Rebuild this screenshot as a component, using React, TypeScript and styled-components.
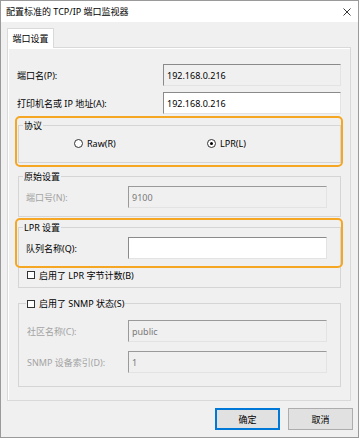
import React from "react";
import styled, { createGlobalStyle, css } from "styled-components";

const GlobalStyle = createGlobalStyle`
  html, body {
    margin: 0;
    padding: 0;
    background: #fff;
  }
  body {
    font-family: "Noto Sans", "Noto Sans CJK SC", sans-serif;
    font-size: 9px;
    color: #000;
  }
  * {
    box-sizing: border-box;
  }
`;

const Window = styled.div`
  width: 359px;
  height: 438px;
  border: 1px solid #9a9a9a;
  background: #f0f0f0;
  display: flex;
  flex-direction: column;
`;

const TitleBar = styled.div`
  height: 21px;
  background: #fff;
  display: flex;
  align-items: center;
  justify-content: space-between;
  padding: 0 7px 0 5px;
  line-height: 13px;
`;

const TabStrip = styled.div`
  margin-top: 6px;
  padding-left: 6px;
  display: flex;
  position: relative;
  z-index: 1;
`;

const Tab = styled.div`
  width: 47px;
  height: 20px;
  margin-bottom: -1px;
  border: 1px solid #d9d9d9;
  border-bottom: none;
  background: #fff;
  display: flex;
  align-items: center;
  justify-content: center;
  line-height: 13px;
`;

const Panel = styled.div`
  margin-left: 6px;
  width: 344px;
  height: 354px;
  border: 1px solid #d9d9d9;
  box-shadow: inset 1px 1px 0 #fff;
  padding: 0 9px;
  display: flex;
  flex-direction: column;
`;

const Row = styled.div<{ $top: number; $indent?: number }>`
  display: flex;
  align-items: center;
  height: 22px;
  margin-top: ${(p) => p.$top}px;
  padding-left: ${(p) => p.$indent ?? 0}px;
  line-height: 13px;
`;

const Label = styled.span<{ $width: number; $disabled?: boolean }>`
  width: ${(p) => p.$width}px;
  flex: none;
  color: ${(p) => (p.$disabled ? "#a3a3a3" : "#000")};
`;

const Field = styled.div<{ $width: number; $variant: "white" | "readonly" | "disabled" }>`
  width: ${(p) => p.$width}px;
  height: 22px;
  flex: none;
  border: 1px solid;
  border-color: #8a8a8a #e3e3e3 #e3e3e3 #8a8a8a;
  padding: 0 3px;
  display: flex;
  align-items: center;
  ${(p) =>
    p.$variant === "white"
      ? css`
          background: #fff;
          color: #000;
        `
      : p.$variant === "readonly"
        ? css`
            background: #f0f0f0;
            color: #000;
          `
        : css`
            background: #f0f0f0;
            color: #7a7a7a;
            border-color: #9a9a9a #e3e3e3 #e3e3e3 #9a9a9a;
          `}
`;

const Marked = styled.div<{ $height?: number }>`
  position: relative;
  margin: ${(p) => (p.$height ? "4px" : "5px")} 0 0 1px;

  &::after {
    content: "";
    position: absolute;
    top: -3px;
    left: -3px;
    right: -2px;
    ${(p) =>
      p.$height
        ? css`
            height: ${p.$height}px;
          `
        : css`
            bottom: -4px;
          `}
    border: 2px solid #f5a623;
    border-radius: 5px;
    pointer-events: none;
  }
`;

const Group = styled.fieldset<{ $top?: number; $bottom: number }>`
  margin: ${(p) => p.$top ?? 0}px 0 0 ${(p) => (p.$top !== undefined ? 1 : 0)}px;
  padding: 0 0 ${(p) => p.$bottom}px 0;
  border: 1px solid #d5d5d5;
  min-width: 0;
`;

const Legend = styled.legend<{ $offset?: number }>`
  margin-left: ${(p) => p.$offset ?? 4}px;
  padding: 0 1px;
  height: 13px;
  line-height: 13px;
  display: flex;
  align-items: center;
  gap: 4px;
`;

const RadioRow = styled.div`
  height: 22px;
  display: flex;
  align-items: center;
  padding-left: 55px;
  line-height: 13px;
`;

const RadioItem = styled.label`
  width: 166px;
  display: flex;
  align-items: center;
  gap: 4px;
`;

const RadioCircle = styled.span<{ $checked?: boolean }>`
  width: 9px;
  height: 9px;
  border: 1px solid #333;
  border-radius: 50%;
  background: #fff;
  display: flex;
  align-items: center;
  justify-content: center;

  &::after {
    content: "";
    width: 3px;
    height: 3px;
    border-radius: 50%;
    background: ${(p) => (p.$checked ? "#000" : "transparent")};
  }
`;

const CheckRow = styled.label<{ $top: number }>`
  height: 16px;
  margin-top: ${(p) => p.$top}px;
  padding-left: 8px;
  display: flex;
  align-items: center;
  gap: 4px;
  line-height: 13px;
`;

const CheckBox = styled.span`
  width: 8px;
  height: 8px;
  border: 1px solid #333;
  background: #fff;
  flex: none;
`;

const Buttons = styled.div`
  margin-top: 7px;
  padding-right: 5px;
  display: flex;
  justify-content: flex-end;
  gap: 8px;
`;

const Button = styled.button<{ $focused?: boolean }>`
  width: 65px;
  height: 22px;
  margin: 0;
  padding: 0;
  font: inherit;
  line-height: 13px;
  color: #000;
  background: #e1e1e1;
  border: ${(p) => (p.$focused ? "2px solid #0078d7" : "1px solid #adadad")};
`;

function CloseIcon() {
  return (
    <svg width="8" height="8" viewBox="0 0 8 8">
      <path d="M0.5 0.5 L7.5 7.5 M7.5 0.5 L0.5 7.5" stroke="#222" strokeWidth="0.9" fill="none" />
    </svg>
  );
}

export default function App() {
  return (
    <>
      <GlobalStyle />
      <Window>
        <TitleBar>
          <span>配置标准的 TCP/IP 端口监视器</span>
          <CloseIcon />
        </TitleBar>

        <TabStrip>
          <Tab>端口设置</Tab>
        </TabStrip>

        <Panel>
          <Row $top={16}>
            <Label $width={146}>端口名(P):</Label>
            <Field $width={178} $variant="readonly">192.168.0.216</Field>
          </Row>
          <Row $top={6}>
            <Label $width={146}>打印机名或 IP 地址(A):</Label>
            <Field $width={178} $variant="white">192.168.0.216</Field>
          </Row>

          <Marked>
            <Group $bottom={8}>
              <Legend>协议</Legend>
              <RadioRow>
                <RadioItem>
                  <RadioCircle />
                  Raw(R)
                </RadioItem>
                <RadioItem>
                  <RadioCircle $checked />
                  LPR(L)
                </RadioItem>
              </RadioRow>
            </Group>
          </Marked>

          <Group $top={7} $bottom={8}>
            <Legend>原始设置</Legend>
            <Row $top={3} $indent={7}>
              <Label $width={102} $disabled>
                端口号(N):
              </Label>
              <Field $width={199} $variant="disabled">9100</Field>
            </Row>
          </Group>

          <Marked $height={46}>
            <Group $bottom={4}>
              <Legend>LPR 设置</Legend>
              <Row $top={3} $indent={7}>
                <Label $width={102}>队列名称(Q):</Label>
                <Field $width={199} $variant="white" />
              </Row>
              <CheckRow $top={8}>
                <CheckBox />
                启用了 LPR 字节计数(B)
              </CheckRow>
            </Group>
          </Marked>

          <Group $top={9} $bottom={13}>
            <Legend $offset={7}>
              <CheckBox />
              启用了 SNMP 状态(S)
            </Legend>
            <Row $top={10} $indent={8}>
              <Label $width={101} $disabled>
                社区名称(C):
              </Label>
              <Field $width={199} $variant="disabled">public</Field>
            </Row>
            <Row $top={9} $indent={8}>
              <Label $width={101} $disabled>
                SNMP 设备索引(D):
              </Label>
              <Field $width={199} $variant="disabled">1</Field>
            </Row>
          </Group>
        </Panel>

        <Buttons>
          <Button $focused>确定</Button>
          <Button>取消</Button>
        </Buttons>
      </Window>
    </>
  );
}
